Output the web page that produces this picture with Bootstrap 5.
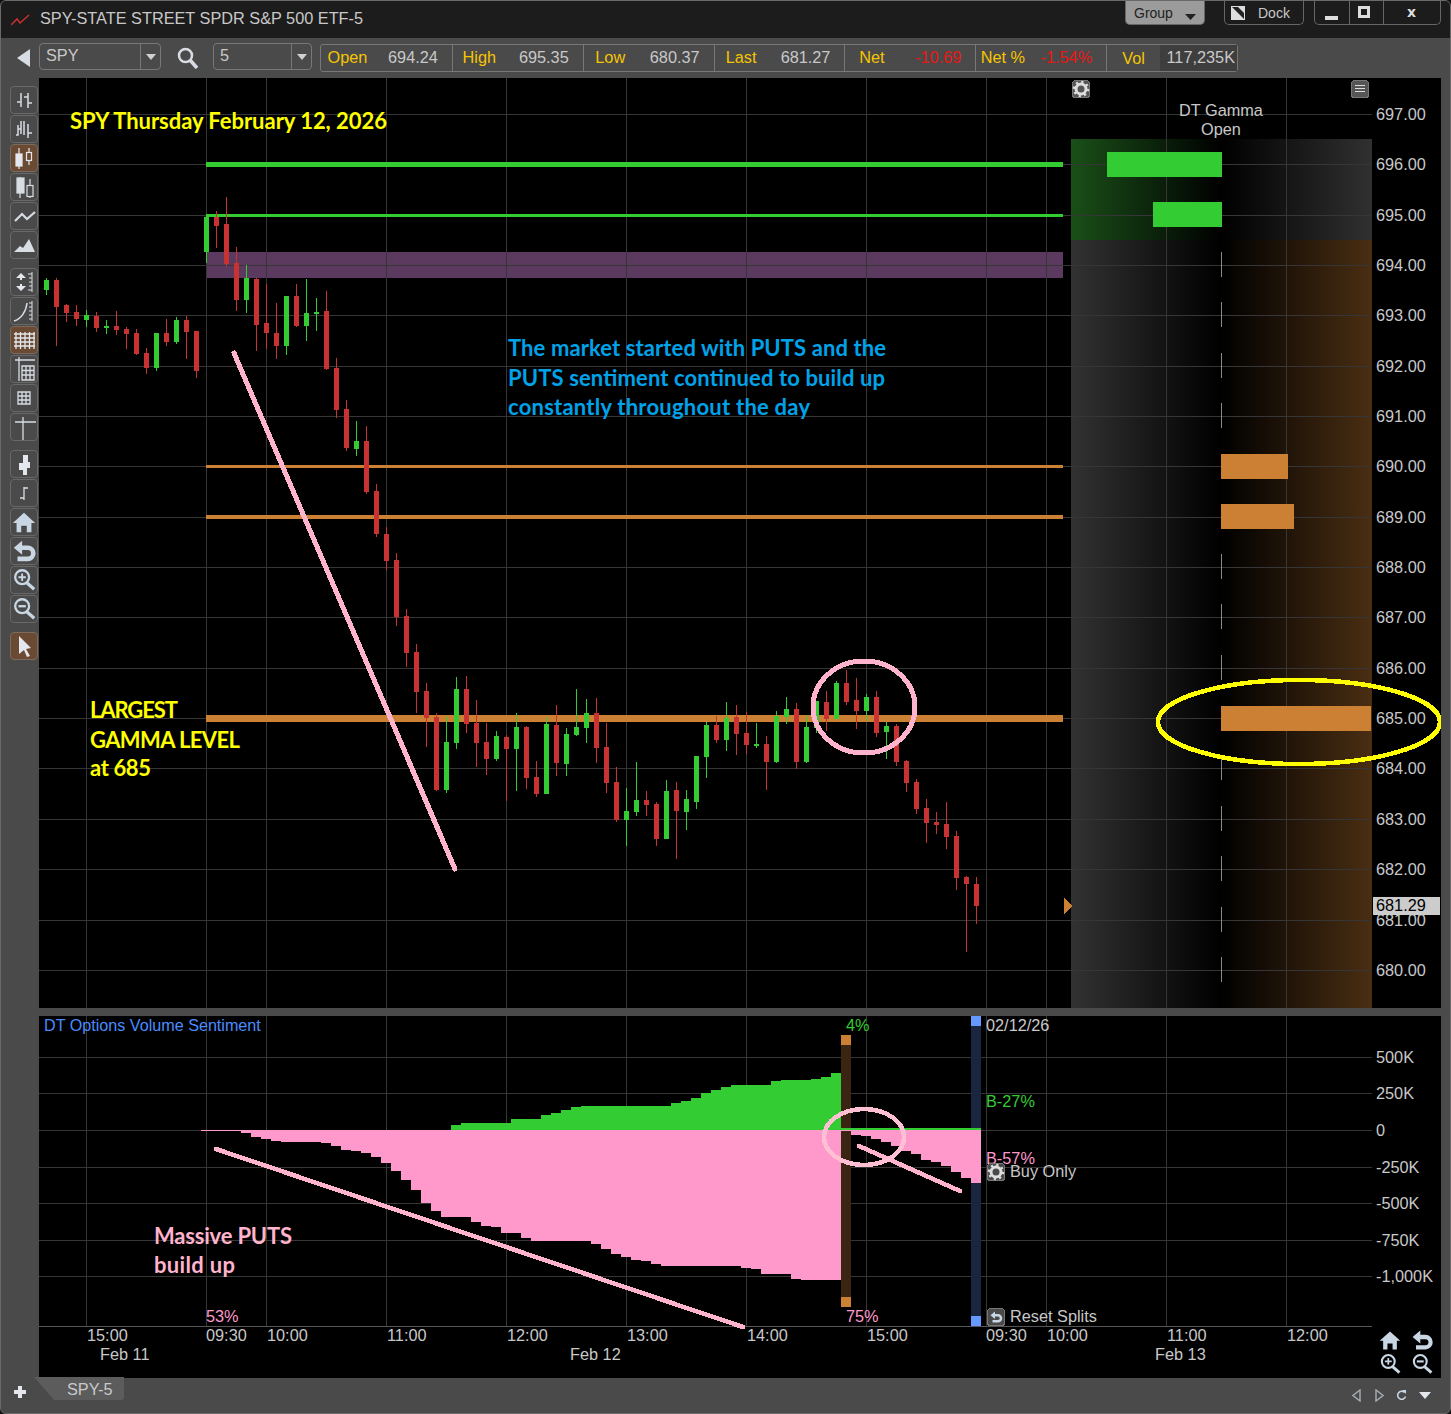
<!DOCTYPE html>
<html lang="en">
<head>
    <meta charset="UTF-8">
    <meta name="viewport" content="width=device-width, initial-scale=1.0">
    <title>SPY-5 Chart</title>

    <link href="https://cdn.jsdelivr.net/npm/bootstrap@5.3.0/dist/css/bootstrap.min.css" rel="stylesheet">

    <style>
        html, body {
            margin: 0;
            background: #111;
        }

        body, button, text {
            font-family: "Liberation Sans", Arial, sans-serif;
        }

        .chart-window {
            width: 1451px;
            height: 1414px;
            background: #4a4a4a;
            border: 1px solid #6a6a6a;
            border-radius: 6px;
            overflow: hidden;
            color: #c8c8c8;
            font-size: 16.3px;
            line-height: 1;
        }

        /* title bar */
        .title-bar {
            height: 37px;
            background: #1c1c1c;
            flex: none;
        }
        .title-icon { margin: 0 10px 0 10px; }
        .title-name { padding-bottom: 2px; }
        .title-btns { margin: -14px 9px 0 0; }
        .win-btn {
            height: 25px;
            border: 1px solid #666;
            border-top: 0;
            border-radius: 0 0 5px 5px;
            font-size: 14px;
            color: #c8c8c8;
            padding-top: 2px;
        }
        .win-group {
            width: 80px;
            background: #9b9b9b;
            color: #222;
            margin-right: 19px;
            padding-left: 8px;
        }
        .win-dock { width: 80px; margin-right: 10px; padding-left: 6px; }
        .win-dock span { margin-left: 13px; }
        .win-ctl { width: 127px; padding-top: 0; }
        .win-ctl > div { width: 34px; height: 100%; border-left: 1px solid #666; }
        .win-ctl > div:first-child { border-left: 0; padding-right: 2px; }
        .win-ctl > div:nth-child(2) { padding-right: 5px; }
        .win-ctl > div:last-child { flex: 1; padding-right: 1px; }
        .close-x { color: #ddd; font-weight: 700; font-family: "DejaVu Sans", sans-serif; }

        /* symbol and quote strip */
        .quote-bar {
            height: 40px;
            flex: none;
        }
        .back-arrow { margin: 0 9px 0 16px; }
        .combo {
            height: 27px;
            border: 1px solid #777;
            border-radius: 4px;
            margin-bottom: 3px;
        }
        .combo-sym { width: 122px; }
        .combo-per { width: 99px; }
        .combo-text { flex: 1; padding: 0 0 3px 6px; }
        .combo-arrow {
            width: 20px;
            height: 100%;
            border-left: 1px solid #777;
        }
        .search-ico { margin: 0 14px 0 16px; }
        .quote-strip {
            width: 918px;
            height: 28px;
            border: 1px solid #777;
            border-radius: 3px;
            margin-left: 8px;
        }
        .quote-cell {
            width: 131px;
            border-left: 1px solid #777;
            height: 100%;
            padding-bottom: 2px;
        }
        .quote-cell:last-child { padding-bottom: 0; }
        .quote-cell:first-child { border-left: 0; }
        .q-name {
            width: 53px;
            text-align: center;
            color: #f6c500;
            flex: none;
        }
        .q-val { flex: 1; text-align: right; padding-right: 14px; }
        .q-down { color: #e81818; }
        .q-dark {
            background: #3e3e3e;
            height: 100%;
            padding: 0 2px 0 0;
            line-height: 24px;
            white-space: nowrap;
        }

        /* left tools */
        .work-row { flex: 1; min-height: 0; }
        .tool-col {
            width: 38px;
            padding: 8px 0 0 9px;
            flex: none;
        }
        .tool-btn {
            display: block;
            width: 28px;
            height: 28px;
            padding: 0;
            margin-bottom: 1px;
            border: 1px solid #686868;
            border-radius: 4px;
            background: #4a4a4a;
        }
        .tool-btn.on { background: #6b4a34; border-color: #7c6a5c; }
        .tool-gap { margin-top: 9px; }
        .tool-btn svg { display: block; }

        /* panes */
        .pane-col { width: 1402px; flex: none; }
        .pane-main, .pane-low { background: #000; display: block; }
        .pane-low { margin-top: 8px; }
        .ax { font-size: 16.3px; fill: #c8c8c8; }
        .ax-title { font-size: 16.15px; fill: #4a8cff; }
        .ax-green { fill: #33cc33; }
        .ax-pink { fill: #ff99cc; }
        .ax-dark { fill: #000; }
        .note {
            font-family: Lato, "Open Sans", sans-serif;
            font-weight: 700;
            font-size: 22px;
        }
        .note-yellow { fill: #ffff00; }
        .note-blue { fill: #00a2e8; }
        .note-pink { fill: #ffb3cc; }

        /* tabs */
        .tab-bar { height: 36px; flex: none; }
        .tab-plus { margin: 0 0 6px 13px; }
        .tab-shape { margin: -13px 0 0 8px; }
        .tab-name { margin: 0 0 0 -58px; padding-bottom: 12px; }
        .tab-tools { margin: 0 19px 0 auto; }
        .tab-tools svg:nth-child(2) { margin-left: 14px; }
        .tab-tools svg:nth-child(3) { margin-left: 12px; }
        .tab-tools svg:nth-child(4) { margin-left: 12px; }
    </style>
</head>
<body>

<svg width="0" height="0" class="position-absolute">
    <defs>
        <symbol id="i-home" viewBox="0 0 28 28"><path fill="#c9d6e4" d="M14 4 26 15h-4v10h-5v-7h-6v7H6V15H2z"/></symbol>
        <symbol id="i-undo" viewBox="0 0 28 28"><path fill="none" stroke="#c9d6e4" stroke-width="5" d="M10 10.500h8a6 6 0 0 1 0 12H7"/><path fill="#c9d6e4" d="M12 3v15L3 10.500z"/></symbol>
        <symbol id="i-zin" viewBox="0 0 28 28"><circle cx="12" cy="11" r="7.500" fill="none" stroke="#c9d6e4" stroke-width="2.500"/><path stroke="#c9d6e4" stroke-width="2" d="M12 7v8M8 11h8"/><path stroke="#c9d6e4" stroke-width="3.500" d="m17 17 8 7"/></symbol>
        <symbol id="i-zout" viewBox="0 0 28 28"><circle cx="12" cy="11" r="7.500" fill="none" stroke="#c9d6e4" stroke-width="2.500"/><path stroke="#c9d6e4" stroke-width="2.500" d="M8 11h8"/><path stroke="#c9d6e4" stroke-width="3.500" d="m17 17 8 7"/></symbol>
        <symbol id="i-gear" viewBox="0 0 18 18"><circle cx="9" cy="9" r="5" fill="none" stroke="#ddd" stroke-width="3"/><circle cx="9" cy="9" r="7" fill="none" stroke="#ddd" stroke-width="2.500" stroke-dasharray="2.200 3.300"/></symbol>
    </defs>
</svg>

<div class="chart-window d-flex flex-column">

    <div class="title-bar d-flex align-items-center">
        <svg class="title-icon" width="19" height="12" viewBox="0 0 19 12"><path fill="none" stroke="#c93030" stroke-width="1.500" d="M0 11 6 5l3 4 9-8"/></svg>
        <span class="title-name">SPY-STATE STREET SPDR S&amp;P 500 ETF-5</span>
        <div class="title-btns ms-auto d-flex">
            <div class="win-btn win-group d-flex align-items-center">Group
                <svg class="ms-auto me-2 mt-2" width="11" height="6" viewBox="0 0 11 6"><path fill="#222" d="M0 0h11L5.500 6z"/></svg>
            </div>
            <div class="win-btn win-dock d-flex align-items-center">
                <svg width="14" height="14" viewBox="0 0 14 14"><path fill="#ddd" d="M0 0h14v14H0z"/><path fill="#222" d="M1 1h6l6 6v6z"/></svg>
                <span>Dock</span>
            </div>
            <div class="win-btn win-ctl d-flex">
                <div class="d-flex align-items-end justify-content-center pb-1"><svg width="13" height="4"><rect width="13" height="4" fill="#ddd"/></svg></div>
                <div class="d-flex align-items-center justify-content-center"><svg width="12" height="12"><rect x="1.500" y="1.500" width="9" height="9" fill="none" stroke="#ddd" stroke-width="3"/></svg></div>
                <div class="d-flex align-items-center justify-content-center close-x">x</div>
            </div>
        </div>
    </div>

    <div class="quote-bar d-flex align-items-center">
        <svg class="back-arrow" width="13" height="18" viewBox="0 0 13 18"><path fill="#d8dde4" d="M13 0v18L0 9z"/></svg>
        <div class="combo combo-sym d-flex align-items-center">
            <span class="combo-text">SPY</span>
            <span class="combo-arrow d-flex align-items-center justify-content-center"><svg width="10" height="6"><path fill="#d0d0d0" d="M0 0h10L5 6z"/></svg></span>
        </div>
        <svg class="search-ico" width="22" height="22" viewBox="0 0 22 22"><circle cx="8.500" cy="8.500" r="6.500" fill="none" stroke="#d8dde4" stroke-width="2.500"/><path stroke="#d8dde4" stroke-width="3.500" d="m13 13 7 8"/></svg>
        <div class="combo combo-per d-flex align-items-center">
            <span class="combo-text">5</span>
            <span class="combo-arrow d-flex align-items-center justify-content-center"><svg width="10" height="6"><path fill="#d0d0d0" d="M0 0h10L5 6z"/></svg></span>
        </div>
        <div class="quote-strip d-flex align-items-center">
            <div class="quote-cell d-flex align-items-center"><span class="q-name">Open</span><span class="q-val">694.24</span></div>
            <div class="quote-cell d-flex align-items-center"><span class="q-name">High</span><span class="q-val">695.35</span></div>
            <div class="quote-cell d-flex align-items-center"><span class="q-name">Low</span><span class="q-val">680.37</span></div>
            <div class="quote-cell d-flex align-items-center"><span class="q-name">Last</span><span class="q-val">681.27</span></div>
            <div class="quote-cell d-flex align-items-center"><span class="q-name">Net</span><span class="q-val q-down">-10.69</span></div>
            <div class="quote-cell d-flex align-items-center"><span class="q-name">Net %</span><span class="q-val q-down">-1.54%</span></div>
            <div class="quote-cell d-flex align-items-center"><span class="q-name">Vol</span><span class="q-val q-dark">117,235K</span></div>
        </div>
    </div>

    <div class="work-row d-flex">
        <div class="tool-col">
            <button class="tool-btn"><svg width="26" height="26" viewBox="0 0 26 26" fill="none" stroke="#d8dde4" stroke-width="1.500"><path d="M10 6v14M6 15h4M17 6v15M13 10h4M17 16h4"/></svg></button>
            <button class="tool-btn"><svg width="26" height="26" viewBox="0 0 26 26" fill="none" stroke="#d8dde4" stroke-width="1.500"><path d="M7 9v10H5M7 13h3M10 5v13M13 5v14M17 8v14M17 17h4"/></svg></button>
            <button class="tool-btn on"><svg width="26" height="26" viewBox="0 0 26 26" stroke="#e4e8ee" stroke-width="1.200"><path d="M8 3v21M18 3v17"/><rect x="5" y="9" width="6" height="12" fill="#e4e8ee"/><rect x="15.500" y="7.500" width="5" height="8" fill="#6b4a34"/></svg></button>
            <button class="tool-btn"><svg width="26" height="26" viewBox="0 0 26 26" stroke="#d8dde4" stroke-width="1.200"><path d="M9 3v21M19 5v19"/><rect x="6" y="4" width="7" height="15" fill="#d8dde4"/><rect x="16" y="11.500" width="6" height="11" fill="#4a4a4a"/></svg></button>
            <button class="tool-btn"><svg width="26" height="26" viewBox="0 0 26 26"><path fill="none" stroke="#d8dde4" stroke-width="2.200" d="m4 18 7-7 5 5 8-7"/></svg></button>
            <button class="tool-btn"><svg width="26" height="26" viewBox="0 0 26 26"><path fill="#d8dde4" d="m3 20 6-6 3 2 6-9 6 13z"/></svg></button>

            <button class="tool-btn tool-gap"><svg width="26" height="26" viewBox="0 0 26 26"><path fill="#e4e8ee" d="M5 9 10 4l5 5h-4v2H9V9zM5 17l5 5 5-5h-4v-2H9v2z"/><path stroke="#d8dde4" fill="none" d="M21 3v20M17 5h4M18 9h3M18 13h3M18 17h3M17 21h4"/></svg></button>
            <button class="tool-btn"><svg width="26" height="26" viewBox="0 0 26 26" fill="none" stroke="#d8dde4"><path stroke-width="1.500" d="M3 23c7-2 12-9 13-18"/><path d="M21 3v20M18 5h3M18 9h3M18 13h3M18 17h3M18 21h3"/></svg></button>
            <button class="tool-btn on"><svg width="26" height="26" viewBox="0 0 26 26" fill="none" stroke="#e4e8ee" stroke-width="1.300"><path d="M5 5v17M9.500 5v17M14 5v17M18.500 5v17M23 5v17M3 7h21M3 11h21M3 15h21M3 19h21"/></svg></button>
            <button class="tool-btn"><svg width="26" height="26" viewBox="0 0 26 26" fill="none" stroke="#d8dde4" stroke-width="1.300"><path d="M4 4h20M8 1v24M11 10h12v14H11zM11 14.500h12M11 19h12M15 10v14M19 10v14"/></svg></button>
            <button class="tool-btn"><svg width="26" height="26" viewBox="0 0 26 26" fill="none" stroke="#d8dde4" stroke-width="1.300"><path d="M7 7h12v12H7zM7 11h12M7 15h12M11 7v12M15 7v12"/></svg></button>
            <button class="tool-btn"><svg width="26" height="26" viewBox="0 0 26 26" fill="none" stroke="#d8dde4" stroke-width="1.300"><path d="M4 8h21M12 3v24"/></svg></button>

            <button class="tool-btn tool-gap"><svg width="26" height="26" viewBox="0 0 26 26"><path fill="#e4e8ee" d="M12 4h5v7h2v6h-3v7h-4v-5H8v-7h4z"/></svg></button>
            <button class="tool-btn"><svg width="26" height="26" viewBox="0 0 26 26" fill="none" stroke="#d8dde4" stroke-width="1.300"><path d="M13 7v13M9 18h4M13 8h4"/></svg></button>
            <button class="tool-btn"><svg width="26" height="26"><use href="#i-home"/></svg></button>
            <button class="tool-btn"><svg width="26" height="26"><use href="#i-undo"/></svg></button>
            <button class="tool-btn"><svg width="26" height="26"><use href="#i-zin"/></svg></button>
            <button class="tool-btn"><svg width="26" height="26"><use href="#i-zout"/></svg></button>
            <button class="tool-btn on tool-gap"><svg width="26" height="26" viewBox="0 0 26 26"><path fill="#e4e8ee" d="m8 3 12 12-5 1 4 7-3 1-3-7-5 4z"/></svg></button>
        </div>

        <div class="pane-col">
            <svg id="mainPane" class="pane-main" width="1402" height="930" viewBox="39 78 1402 930" shape-rendering="crispEdges"></svg>
            <svg id="lowPane" class="pane-low" width="1402" height="362" viewBox="39 1016 1402 362" shape-rendering="crispEdges"></svg>
        </div>
    </div>

    <div class="tab-bar d-flex align-items-center">
        <svg class="tab-plus" width="12" height="12" viewBox="0 0 12 12"><path fill="#e4e8ee" d="M4 0h4v4h4v4H8v4H4V8H0V4h4z"/></svg>
        <svg class="tab-shape" width="91" height="23" viewBox="0 0 91 23"><path fill="#5c5c5c" d="M0 0h90v20q0 3-3 3H20z"/></svg>
        <span class="tab-name">SPY-5</span>
        <div class="tab-tools d-flex align-items-center">
            <svg width="9" height="13" viewBox="0 0 9 13"><path fill="none" stroke="#a0a8b0" stroke-width="1.500" d="M8 1v11L1 6.500z"/></svg>
            <svg width="9" height="13" viewBox="0 0 9 13"><path fill="none" stroke="#a0a8b0" stroke-width="1.500" d="M1 1v11l7-5.500z"/></svg>
            <svg width="11" height="11" viewBox="0 0 11 11"><path fill="none" stroke="#c9d6e4" stroke-width="1.500" d="M8.500 2.500a4 4 0 1 0 1 4"/><path fill="#c9d6e4" d="M6 0h4v4z"/></svg>
            <svg width="12" height="7" viewBox="0 0 12 7"><path fill="#e4e8ee" d="M0 0h12L6 7z"/></svg>
        </div>
    </div>
</div>

<script src="https://cdn.jsdelivr.net/npm/bootstrap@5.3.0/dist/js/bootstrap.bundle.min.js"></script>

<script>
    const GREEN = '#33cc33', RED = '#c83232', ORANGE = '#cc8033', PINK = '#ffb3cc', AREA = '#ff99cc', GRID = '#363636';

    // [type, wick top, wick bottom, body top, body bottom], first candle at x=46, one every 10px
    const candles = [
        ['g',278,295,280,290],['r',278,346,280,307],['r',304,322,305,313],['r',305,326,312,319],['g',310,327,315,320],
        ['r',312,332,316,328],['g',320,334,326,328],['r',311,335,326,330],['r',327,349,329,334],['r',329,355,333,354],
        ['r',348,374,353,368],['g',333,371,333,368],['r',319,346,333,342],['g',317,344,320,342],['r',316,359,320,332],
        ['r',331,378,331,371],['g',217,263,217,252],['r',211,248,217,226],['r',197,267,224,264],['r',247,311,263,300],
        ['g',265,313,278,300],['r',278,351,279,325],['r',284,349,323,333],['r',303,359,333,346],['g',296,355,296,346],
        ['r',284,327,296,326],['g',279,341,313,326],['g',298,331,312,314],['r',291,370,311,369],['r',358,418,368,410],
        ['r',400,451,409,448],['g',421,456,441,449],['r',426,494,441,492],['r',484,537,491,534],['r',527,570,534,561],
        ['r',553,626,560,617],['r',609,667,616,653],['r',644,713,652,692],['r',683,747,691,718],['r',713,791,717,790],
        ['g',716,793,742,790],['g',677,749,689,743],['r',676,733,689,724],['r',700,767,723,743],['r',723,775,742,759],
        ['g',731,761,736,759],['r',735,801,737,749],['g',713,791,727,749],['r',726,789,727,778],['r',761,797,777,794],
        ['g',717,794,724,794],['r',705,776,725,763],['g',728,776,734,764],['g',689,736,727,735],['g',699,743,713,728],
        ['r',698,763,713,748],['r',723,793,747,783],['r',767,822,782,820],['g',788,846,811,820],['g',762,816,800,812],
        ['r',791,816,800,805],['r',802,846,804,839],['g',780,839,791,839],['r',782,859,790,811],['g',790,830,799,812],
        ['g',756,809,756,802],['g',722,778,725,757],['r',716,743,725,740],['g',702,751,718,740],['r',705,755,717,734],
        ['r',712,754,733,745],['g',723,748,744,746],['r',736,790,744,762],['g',711,763,716,762],['g',697,724,709,717],
        ['r',703,769,709,762],['g',715,763,727,762],['g',701,733,701,728],['r',691,731,702,719],['g',681,719,683,719],
        ['r',670,705,683,702],['r',678,729,700,711],['g',694,721,697,711],['r',691,737,697,733],['g',722,759,726,732],
        ['r',724,766,726,762],['r',760,792,761,783],['r',779,814,782,809],['r',799,843,808,823],['r',812,834,822,825],
        ['r',802,849,824,837],['r',831,890,836,878],['r',876,952,877,884],['r',877,924,884,906]
    ];

    const gridX = [86, 206, 266, 386, 506, 626, 746, 866, 986, 1046, 1166, 1286];
    const priceRows = [[697,114],[696,164],[695,215],[694,265],[693,315],[692,366],[691,416],[690,466],[689,517],[688,567],
        [687,617],[686,668],[685,718],[684,768],[683,819],[682,869],[681,920],[680,970]];

    const rect = (x, y, w, h, fill) => `<rect x="${x}" y="${y}" width="${w}" height="${h}" fill="${fill}"/>`;
    const line = (x1, y1, x2, y2, color, sw) => `<line x1="${x1}" y1="${y1}" x2="${x2}" y2="${y2}" stroke="${color}" stroke-width="${sw}" stroke-linecap="round"/>`;
    const label = (x, y, txt, cls = 'ax') => `<text x="${x}" y="${y}" class="${cls}" shape-rendering="auto">${txt}</text>`;
    const note = (x, y, txt, cls, len) => `<text x="${x}" y="${y}" class="note ${cls}" textLength="${len}" shape-rendering="auto">${txt}</text>`;
    const gear = (x, y) => `<rect x="${x + .5}" y="${y + .5}" width="17" height="17" rx="3" fill="#4a4a4a" stroke="#777"/><use href="#i-gear" x="${x}" y="${y}" width="18" height="18" shape-rendering="auto"/>`;

    // main price pane
    let main = `<defs>
        <linearGradient id="gGreen"><stop offset="0" stop-color="#1a4f18"/><stop offset="1" stop-color="#000"/></linearGradient>
        <linearGradient id="gGrayR"><stop offset="0" stop-color="#000"/><stop offset="1" stop-color="#303030"/></linearGradient>
        <linearGradient id="gGrayL"><stop offset="0" stop-color="#323232"/><stop offset="1" stop-color="#000"/></linearGradient>
        <linearGradient id="gBrown"><stop offset="0" stop-color="#000"/><stop offset="1" stop-color="#4a2e12"/></linearGradient>
    </defs>`;
    main += rect(1071, 139, 150, 101, 'url(#gGreen)') + rect(1221, 139, 151, 101, 'url(#gGrayR)');
    main += rect(1071, 240, 150, 768, 'url(#gGrayL)') + rect(1221, 240, 151, 768, 'url(#gBrown)');
    main += rect(206, 252, 857, 26, '#5c3a60');
    gridX.forEach(x => main += rect(x, 78, 1, 930, GRID));
    priceRows.forEach(([p, y]) => main += rect(39, y, 1333, 1, GRID));

    main += rect(206, 162, 857, 5, GREEN) + rect(206, 214, 857, 3, GREEN);
    main += rect(206, 465, 857, 3, ORANGE) + rect(206, 515, 857, 4, ORANGE) + rect(206, 715, 857, 7, ORANGE);

    // gamma bars and open ticks
    priceRows.forEach(([p, y]) => { if (p < 695 && ![690, 689, 685].includes(p)) main += rect(1221, y - 13, 1, 25, '#8a8a8a'); });
    main += rect(1107, 152, 115, 25, GREEN) + rect(1153, 202, 69, 25, GREEN);
    main += rect(1221, 454, 67, 25, ORANGE) + rect(1221, 504, 73, 25, ORANGE) + rect(1221, 706, 150, 25, ORANGE);

    candles.forEach(([t, wt, wb, bt, bb], i) => {
        const x = 46 + i * 10, c = t === 'g' ? GREEN : RED;
        main += rect(x, wt, 1, wb - wt, c) + rect(x - 2, bt, 5, Math.max(bb - bt, 2), c);
    });

    main += line(234, 353, 455, 869, PINK, 5);
    main += `<ellipse cx="864" cy="707" rx="51" ry="46" fill="none" stroke="${PINK}" stroke-width="5"/>`;
    main += `<ellipse cx="1299" cy="722" rx="141" ry="42" fill="none" stroke="#ffff00" stroke-width="4.500"/>`;
    main += `<path d="M1064 897l8 9-8 9z" fill="${ORANGE}"/>`;

    priceRows.forEach(([p, y]) => main += label(1376, y + 6, p + '.00'));
    main += rect(1373, 897, 67, 18, '#cccccc') + label(1376, 911, '681.29', 'ax ax-dark');

    main += `<rect x="1072.500" y="80.500" width="17" height="17" rx="3" fill="#555" stroke="#777"/><use href="#i-gear" x="1072" y="80" width="18" height="18" shape-rendering="auto"/>`;
    main += `<rect x="1351.500" y="80.500" width="17" height="17" rx="3" fill="#555" stroke="#777"/>` + rect(1355, 85, 10, 1, '#ddd') + rect(1355, 88, 10, 1, '#ddd') + rect(1355, 91, 10, 1, '#ddd');
    main += `<text x="1221" y="116" class="ax" text-anchor="middle" shape-rendering="auto">DT Gamma</text><text x="1221" y="135" class="ax" text-anchor="middle" shape-rendering="auto">Open</text>`;

    main += note(70, 129, 'SPY Thursday February 12, 2026', 'note-yellow', 317);
    main += note(508, 356, 'The market started with PUTS and the', 'note-blue', 378);
    main += note(508, 386, 'PUTS sentiment continued to build up', 'note-blue', 377);
    main += note(508, 415, 'constantly throughout the day', 'note-blue', 302);
    main += note(90, 718, 'LARGEST', 'note-yellow', 88);
    main += note(90, 748, 'GAMMA LEVEL', 'note-yellow', 150);
    main += note(90, 776, 'at 685', 'note-yellow', 61);
    document.getElementById('mainPane').innerHTML = main;

    // volume sentiment pane, steps are 10px wide from x=201
    const pinkY = [1131,1131,1131,1131,1133,1137,1139,1141,1142,1142,1142,1142,1143,1146,1150,1151,1153,1157,1163,1171,1180,1190,1203,1211,
        1217,1217,1217,1222,1226,1227,1233,1233,1238,1241,1241,1241,1241,1241,1241,1244,1249,1254,1257,1260,1261,1264,
        1266,1266,1266,1266,1266,1266,1266,1266,1268,1269,1274,1274,1274,1279,1280,1280,1280,1280];
    const greenY = {25:1125,26:1123,27:1123,28:1123,29:1123,30:1123,31:1119,32:1119,33:1119,34:1115,35:1113,36:1110,37:1107,38:1106,39:1106,40:1106,
        41:1106,42:1106,43:1106,44:1106,45:1106,46:1106,47:1103,48:1101,49:1098,50:1093,51:1090,52:1087,53:1085,54:1085,55:1085,56:1085,57:1081,
        58:1080,59:1080,60:1080,61:1079,62:1077,63:1073};
    const tailY = [1135,1136,1139,1142,1146,1151,1154,1160,1162,1166,1172,1178,1183];

    let low = '';
    gridX.forEach(x => low += rect(x, 1016, 1, 310, GRID));
    [1057, 1093, 1130, 1167, 1203, 1240, 1276].forEach(y => low += rect(39, y, 1333, 1, GRID));
    low += rect(39, 1326, 1333, 1, '#555');

    low += rect(841, 1035, 10, 272, '#3a2412') + rect(841, 1035, 10, 10, ORANGE) + rect(841, 1297, 10, 10, ORANGE);
    low += rect(971, 1016, 10, 310, '#1a2540') + rect(971, 1016, 10, 10, '#6699ff') + rect(971, 1316, 10, 10, '#6699ff');

    Object.entries(greenY).forEach(([i, y]) => low += rect(201 + i * 10, y, 10, 1130 - y, GREEN));
    pinkY.forEach((y, i) => low += rect(201 + i * 10, 1130, 10, y - 1130, AREA));
    low += rect(841, 1130, 10, 1, AREA) + rect(841, 1128, 140, 2, GREEN);
    tailY.forEach((y, i) => low += rect(851 + i * 10, 1130, 10, y - 1130, AREA));

    low += line(216, 1149, 743, 1327, PINK, 4.5) + line(859, 1146, 960, 1191, PINK, 4.5);
    low += `<ellipse cx="864" cy="1137" rx="40" ry="28" fill="none" stroke="#ffc0d4" stroke-width="4.500"/>`;

    low += label(44, 1031, 'DT Options Volume Sentiment', 'ax ax-title');
    low += label(846, 1031, '4%', 'ax ax-green') + label(846, 1322, '75%', 'ax ax-pink') + label(206, 1322, '53%', 'ax ax-pink');
    low += label(986, 1031, '02/12/26') + label(986, 1107, 'B-27%', 'ax ax-green') + label(986, 1164, 'B-57%', 'ax ax-pink');
    low += gear(987, 1163) + label(1010, 1177, 'Buy Only');
    low += `<rect x="987.500" y="1308.500" width="17" height="17" rx="3" fill="#4a4a4a" stroke="#777"/><use href="#i-undo" x="989" y="1310" width="14" height="14" shape-rendering="auto"/>` + label(1010, 1322, 'Reset Splits');
    low += note(154, 1244, 'Massive PUTS', 'note-pink', 138) + note(154, 1273, 'build up', 'note-pink', 81);

    [['500K',1057],['250K',1093],['0',1130],['-250K',1167],['-500K',1203],['-750K',1240],['-1,000K',1276]]
        .forEach(([t, y]) => low += label(1376, y + 6, t));
    [['15:00',87],['09:30',206],['10:00',267],['11:00',387],['12:00',507],['13:00',627],['14:00',747],['15:00',867],['09:30',986],['10:00',1047],['11:00',1167],['12:00',1287]]
        .forEach(([t, x]) => low += label(x, 1341, t));
    [['Feb 11',100],['Feb 12',570],['Feb 13',1155]].forEach(([t, x]) => low += label(x, 1360, t));

    [['i-home',1378,1328],['i-undo',1410,1328],['i-zin',1378,1352],['i-zout',1410,1352]]
        .forEach(([id, x, y]) => low += `<use href="#${id}" x="${x}" y="${y}" width="24" height="24" shape-rendering="auto"/>`);
    document.getElementById('lowPane').innerHTML = low;
</script>

</body>
</html>
